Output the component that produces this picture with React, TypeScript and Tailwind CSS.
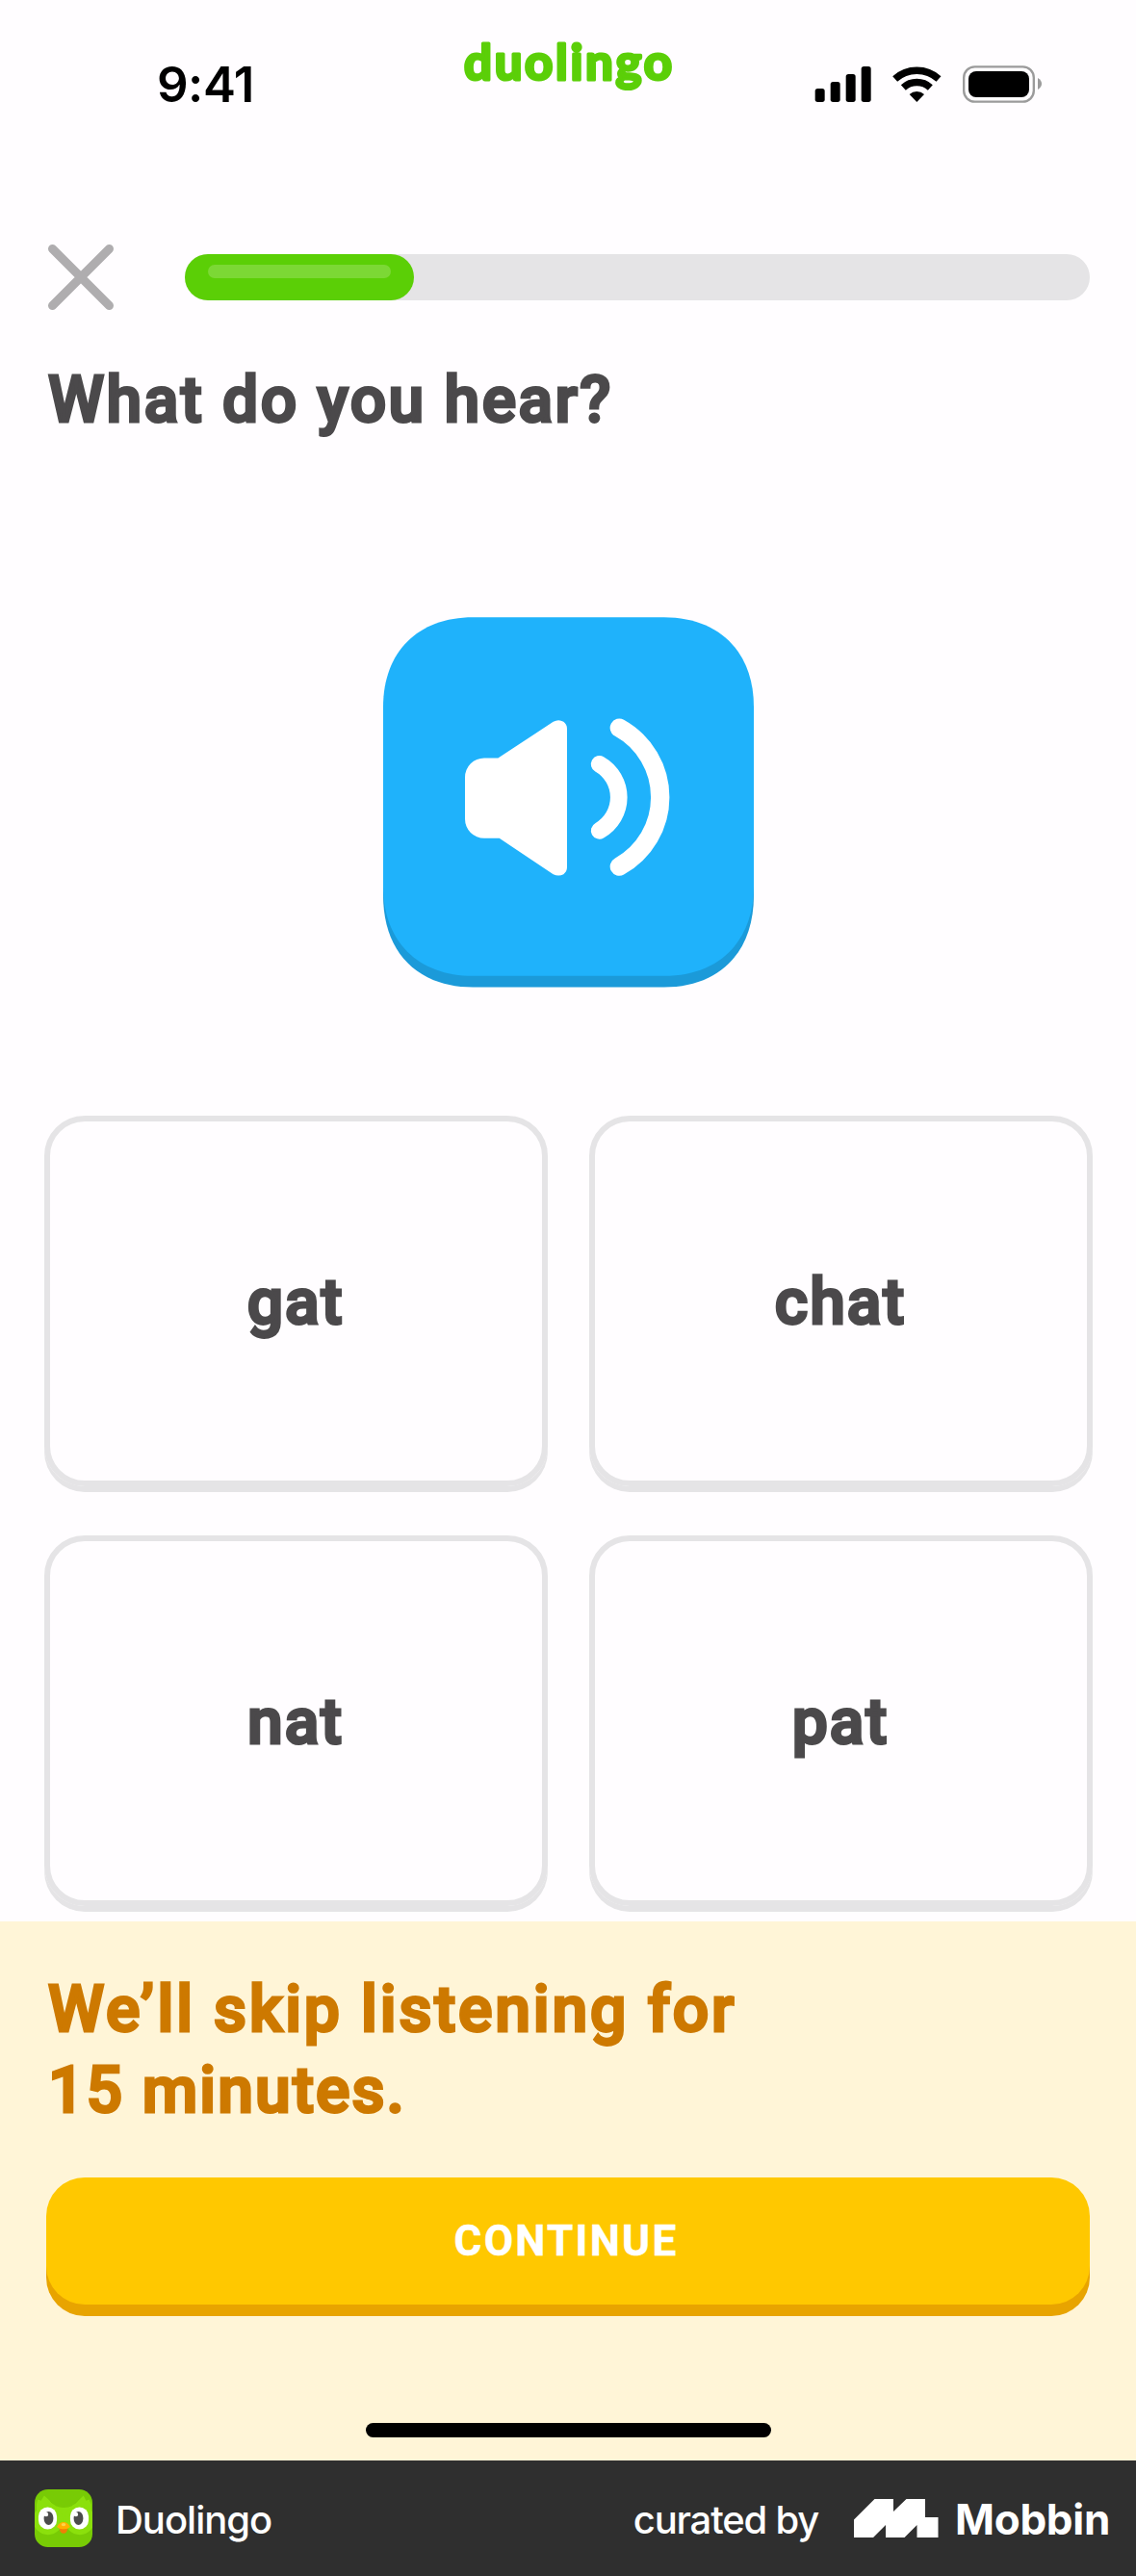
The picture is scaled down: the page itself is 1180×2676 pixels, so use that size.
const cards = ["gat", "chat", "nat", "pat"];

function Wordmark() {
  return (
    <svg className="absolute top-[30px] left-[470px]" width="240" height="80" viewBox="0 0 240 80">
      <text
        x="12"
        y="53"
        textLength="216"
        fontFamily="Lato"
        fontWeight="700"
        fontSize="51"
        fill="#5bcf08"
        stroke="#5bcf08"
        strokeWidth="3.2"
        strokeLinejoin="round"
      >
        duolingo
      </text>
    </svg>
  );
}

function StatusIcons() {
  return (
    <svg width="250" height="60" viewBox="0 0 750 180" className="ml-auto mr-[90px] mt-[60px]">
      <g fill="#000">
        <rect x="20" y="96" width="30" height="42" rx="8" />
        <rect x="68" y="75" width="30" height="63" rx="8" />
        <rect x="116" y="51" width="30" height="87" rx="8" />
        <rect x="164" y="27" width="30" height="111" rx="8" />
        <path d="M337 138 L314 114 A34 34 0 0 1 360 114 Z" />
      </g>
      <g fill="none" stroke="#000" strokeWidth="22">
        <path d="M269 66 A101 101 0 0 1 405 66" />
        <path d="M295 93 A62 62 0 0 1 379 93" />
      </g>
      <rect x="483.500" y="28" width="218" height="109" rx="34" fill="none" stroke="#9b9b9b" strokeWidth="7" />
      <rect x="498" y="42" width="189" height="81" rx="24" fill="#000" />
      <path d="M714 63 Q726 70 726 81 Q726 92 714 99 Z" fill="#9b9b9b" />
    </svg>
  );
}

function SpeakerButton() {
  return (
    <svg width="385" height="385" viewBox="53 64 1155 1154">
      <path
        d="M53 600 H1208 V930 C1208 1110 1100 1217 928 1217 H333 C161 1217 53 1110 53 930 Z"
        fill="#1b9ad9"
      />
      <path
        d="M333 64 H928 C1100 64 1208 172 1208 344 V902 C1208 1074 1100 1182 928 1182 H333 C161 1182 53 1074 53 902 V344 C53 172 161 64 333 64 Z"
        fill="#1fb2fb"
      />
      <path
        d="M411 503 L583 390 Q600 381 615 390 Q626 398 626 412 V843 Q626 857 615 865 Q600 873 583 865 L415 753 H368 A60 60 0 0 1 308 693 V563 A60 60 0 0 1 368 503 Z"
        fill="#fff"
      />
      <path d="M727 522 A119 119 0 0 1 727 729" fill="none" stroke="#fff" strokeWidth="53" strokeLinecap="round" />
      <path d="M789 409 A247 247 0 0 1 789 841" fill="none" stroke="#fff" strokeWidth="58" strokeLinecap="round" />
    </svg>
  );
}

function OwlIcon() {
  return (
    <svg width="60" height="60" viewBox="0 0 182 182">
      <defs>
        <clipPath id="owl">
          <rect width="182" height="182" rx="42" />
        </clipPath>
      </defs>
      <g clipPath="url(#owl)">
        <rect width="182" height="182" fill="#78cb05" />
        <path d="M6 48 L10 32 L20 36 L30 20 L46 34 Q62 56 92 58 Q122 56 138 34 L154 20 L162 36 L172 32 L178 48 V120 H6 Z" fill="#8be00c" />
        <path d="M46 34 Q62 56 92 58 Q122 56 138 34 L150 22 L120 50 Q92 66 64 50 Z" fill="#6fbe05" />
        <circle cx="42" cy="96" r="47" fill="#8be00c" />
        <circle cx="142" cy="96" r="47" fill="#8be00c" />
        <rect x="12" y="56" width="58" height="70" rx="29" fill="#fff" />
        <rect x="112" y="56" width="58" height="70" rx="29" fill="#fff" />
        <ellipse cx="44" cy="91" rx="15" ry="21" fill="#4b4b4b" />
        <ellipse cx="138" cy="91" rx="15" ry="21" fill="#4b4b4b" />
        <circle cx="36" cy="79" r="7" fill="#fff" />
        <circle cx="130" cy="79" r="7" fill="#fff" />
        <path d="M78 122 H104 Q102 139 91 139 Q80 139 78 122 Z" fill="#f07f06" />
        <path d="M70 118 Q78 103 91 103 Q104 103 112 118 Q102 127 91 125 Q80 127 70 118 Z" fill="#ffb000" />
        <ellipse cx="91" cy="111" rx="7" ry="5" fill="#ffd24a" />
      </g>
    </svg>
  );
}

export default function App() {
  return (
    <div className="flex h-[2676px] w-[1180px] flex-col overflow-hidden bg-[#fffdff] font-['Roboto',sans-serif]">
      <header className="relative flex h-[253px] shrink-0 items-start">
        <div className="mt-[58px] ml-[163px] font-['Inter',sans-serif] text-[51px] leading-[60px] font-semibold tracking-[-0.500px] text-black">
          9:41
        </div>
        <Wordmark />
        <StatusIcons />
      </header>

      <div className="flex h-[70px] shrink-0 items-center pr-12 pl-[49px]">
        <svg width="70" height="70" viewBox="0 0 70 70" fill="none" stroke="#afadaf" strokeWidth="9" strokeLinecap="round">
          <path d="M5.500 5.500 L64.500 64.500 M64.500 5.500 L5.500 64.500" />
        </svg>
        <div className="ml-[73px] h-12 flex-1 rounded-full bg-[#e5e4e6]">
          <div className="h-12 w-[238px] rounded-full bg-[#5bcf06] px-6 pt-[11px]">
            <div className="h-[14px] rounded-full bg-[#7cd835]" />
          </div>
        </div>
      </div>

      <h1 className="mt-[51px] ml-[50px] text-[66px] leading-[84px] font-medium tracking-[2.450px] text-[#4b494b] [-webkit-text-stroke:3px_#4b494b]">
        What do you hear?
      </h1>

      <div className="mt-[183px] flex justify-center">
        <SpeakerButton />
      </div>

      <main className="mt-[133px] grid grid-cols-2 gap-x-[43px] gap-y-[51px] px-[45.500px]">
        {cards.map((word) => (
          <button
            key={word}
            className="flex h-[385px] items-center justify-center rounded-[42px] border-[6px] border-[#e5e4e6] pt-[3px] text-[66px] leading-[84px] font-medium tracking-[1.900px] text-[#4b494b] shadow-[0_6px_0_#e5e4e6] [-webkit-text-stroke:3px_#4b494b]"
          >
            {word}
          </button>
        ))}
      </main>

      <section className="mt-4 flex h-[560px] shrink-0 flex-col bg-[#fff5d7] px-12 pt-[50px]">
        <p className="ml-[2px] text-[66px] leading-[84px] font-medium text-[#cd7900] [-webkit-text-stroke:3px_#cd7900]">
          <span className="tracking-[2.850px]">We’ll skip listening for</span>
          <br />
          <span className="tracking-[2.100px]">15 minutes.</span>
        </p>
        <button className="mt-12 h-[132px] rounded-[40px] bg-[#ffc800] text-[44px] leading-[60px] font-bold tracking-[2.300px] pr-1 text-white shadow-[0_12px_0_#e8a400] [-webkit-text-stroke:0.5px_#fff]">
          CONTINUE
        </button>
        <div className="mt-[123px] ml-[332px] h-[15px] w-[421px] rounded-full bg-black" />
      </section>

      <footer className="flex h-[120px] shrink-0 items-center bg-[#2f2f2f] pl-9 font-['Inter',sans-serif] text-white">
        <OwlIcon />
        <span className="ml-6 pt-[3px] text-[40px] leading-[60px] font-medium tracking-[-1px]">Duolingo</span>
        <span className="ml-auto pt-[3px] text-[40px] leading-[60px] font-medium tracking-[-1.200px]">curated by</span>
        <svg className="ml-[37px]" width="88" height="40" viewBox="0 0 88 40" fill="#fff">
          <path d="M0 21.500 L21.500 0 H41 V13 L54.500 0 H74 V19 H87.500 V40 H65.500 V27 L52.500 40 H33 V27 L20 40 H0 Z" />
        </svg>
        <span className="mr-[27px] ml-[17px] pt-[2px] text-[44px] leading-[60px] font-bold tracking-[-0.300px]">Mobbin</span>
      </footer>
    </div>
  );
}
